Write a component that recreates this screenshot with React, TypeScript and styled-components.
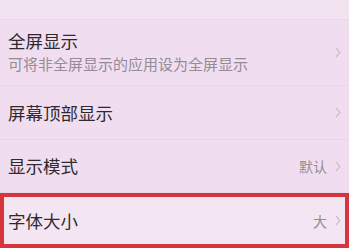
import styled, { createGlobalStyle } from 'styled-components'

const GlobalStyle = createGlobalStyle`
    html, body {
        margin: 0;
        padding: 0;
        background: #f0def0;
    }
    body {
        font-family: 'Noto Sans CJK SC', 'Noto Sans', sans-serif;
    }
`

const Screen = styled.div`
    width: 349px;
    height: 248px;
    overflow: hidden;
    background: #f0def0;
    display: flex;
    flex-direction: column;
`

const TopStub = styled.div`
    height: 19px;
    background: #f2e3f1;
    border-bottom: 1px solid #e9d7e8;
`

const Row = styled.div<{ $height: number; $highlight?: boolean }>`
    box-sizing: border-box;
    height: ${(p) => p.$height}px;
    display: flex;
    align-items: center;
    justify-content: space-between;
    padding: 0 8px;
    border-bottom: 1px solid #e9d7e8;
    ${(p) =>
        p.$highlight &&
        `
        border: 4px solid #d8343e;
        padding: 0 4px;
        background: #f4e5f2;
    `}
`

const Texts = styled.div`
    display: flex;
    flex-direction: column;
`

const Title = styled.div`
    font-size: 17.5px;
    line-height: 22px;
    color: #2e2a2e;
`

const Subtitle = styled.div`
    font-size: 15px;
    line-height: 20px;
    margin-top: 2px;
    color: #958b96;
`

const Side = styled.div`
    display: flex;
    align-items: center;
    gap: 8px;
`

const Value = styled.span`
    font-size: 14px;
    color: #948d94;
`

const Chevron = () => (
    <svg width="6" height="11" viewBox="0 0 6 11">
        <path d="M1 1 L5 5.5 L1 10" fill="none" stroke="#cbbdcb" strokeWidth="1.2" />
    </svg>
)

export default function App() {
    return (
        <>
            <GlobalStyle />
            <Screen>
                <TopStub />
                <Row $height={66}>
                    <Texts>
                        <Title>全屏显示</Title>
                        <Subtitle>可将非全屏显示的应用设为全屏显示</Subtitle>
                    </Texts>
                    <Side>
                        <Chevron />
                    </Side>
                </Row>
                <Row $height={55}>
                    <Title>屏幕顶部显示</Title>
                    <Side>
                        <Chevron />
                    </Side>
                </Row>
                <Row $height={53}>
                    <Title>显示模式</Title>
                    <Side>
                        <Value>默认</Value>
                        <Chevron />
                    </Side>
                </Row>
                <Row $height={55} $highlight>
                    <Title>字体大小</Title>
                    <Side>
                        <Value>大</Value>
                        <Chevron />
                    </Side>
                </Row>
            </Screen>
        </>
    )
}
